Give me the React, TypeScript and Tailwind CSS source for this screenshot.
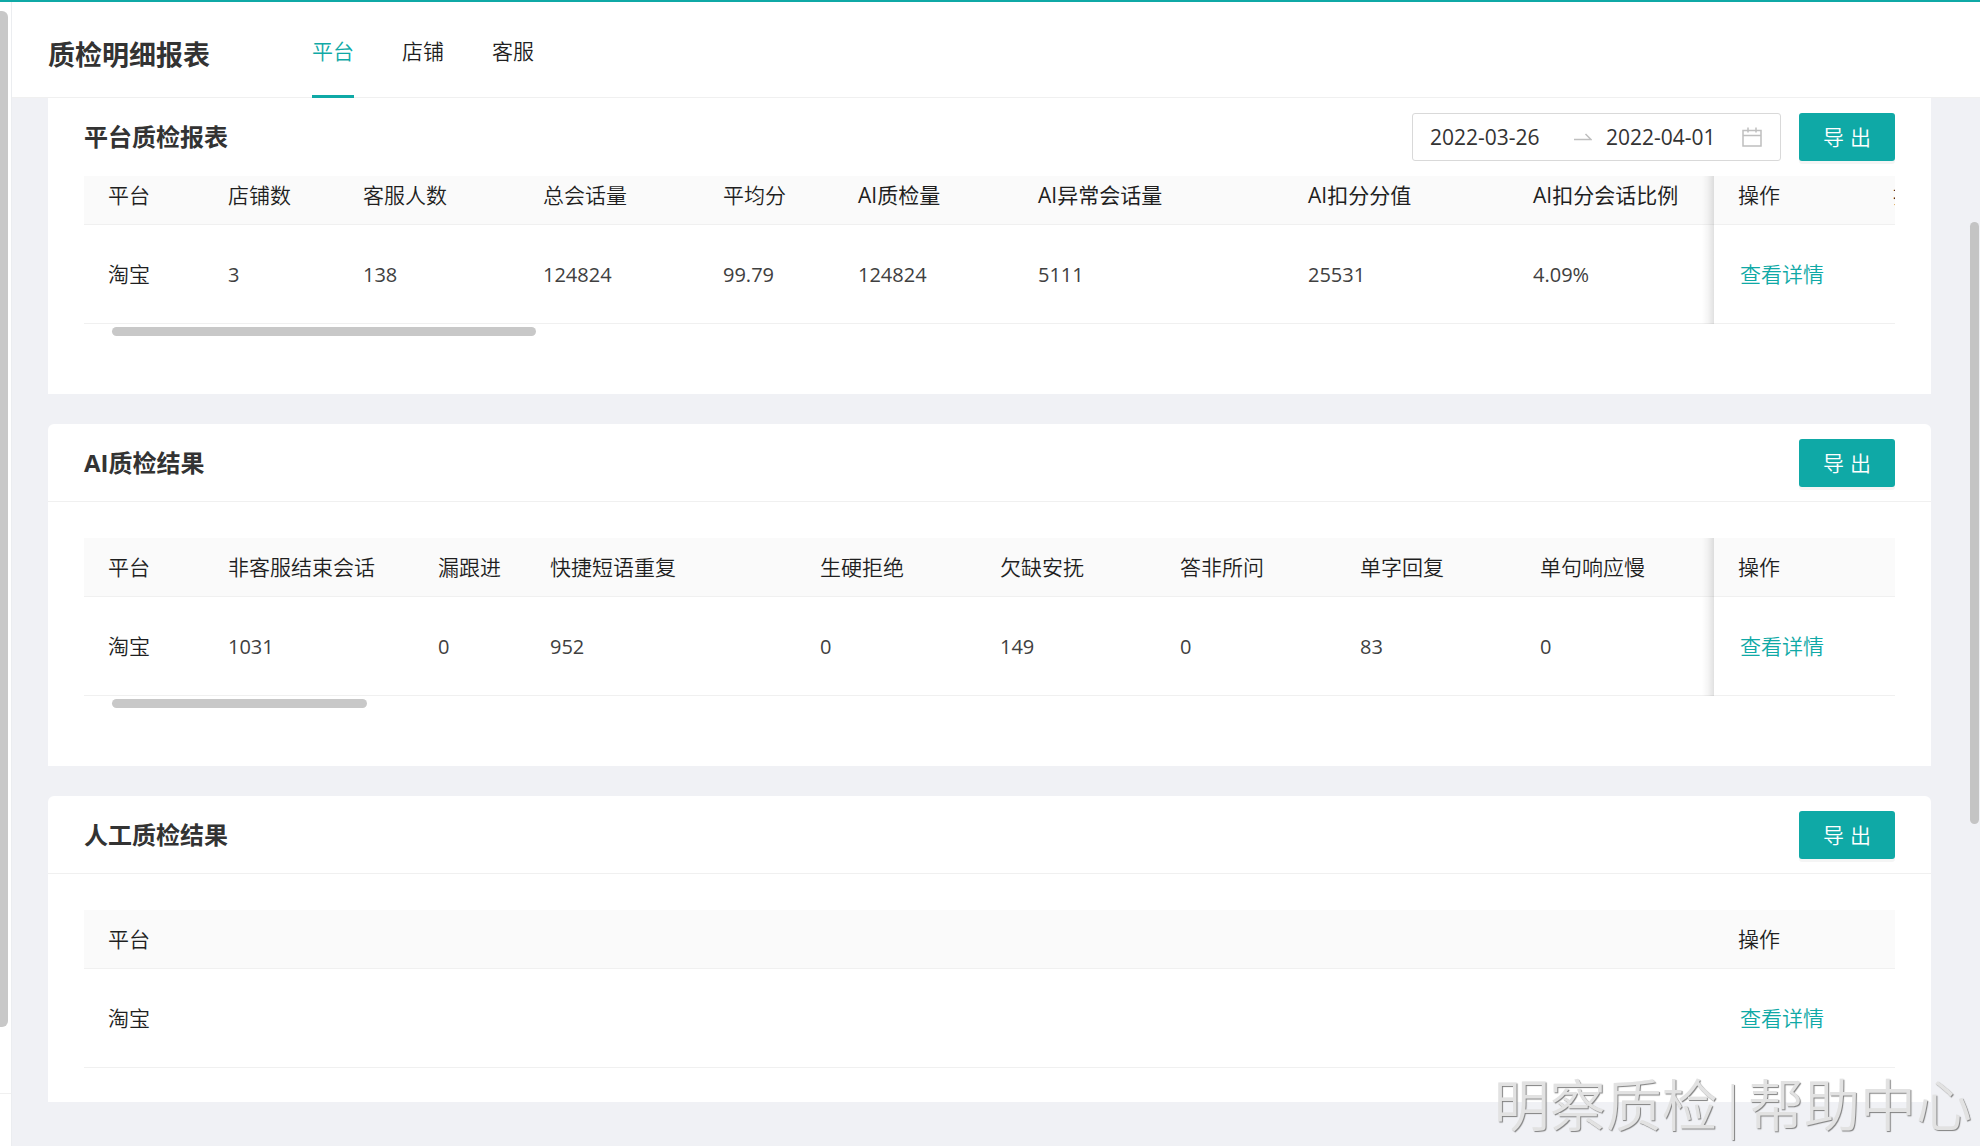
import React from 'react';
import clsx from 'clsx';

type Column = { title: string; value: string; width: string };

const platformColumns: Column[] = [
  { title: '平台', value: '淘宝', width: 'w-[120px]' },
  { title: '店铺数', value: '3', width: 'w-[135px]' },
  { title: '客服人数', value: '138', width: 'w-[180px]' },
  { title: '总会话量', value: '124824', width: 'w-[180px]' },
  { title: '平均分', value: '99.79', width: 'w-[135px]' },
  { title: 'AI质检量', value: '124824', width: 'w-[180px]' },
  { title: 'AI异常会话量', value: '5111', width: 'w-[270px]' },
  { title: 'AI扣分分值', value: '25531', width: 'w-[225px]' },
  { title: 'AI扣分会话比例', value: '4.09%', width: '' },
];

const aiColumns: Column[] = [
  { title: '平台', value: '淘宝', width: 'w-[120px]' },
  { title: '非客服结束会话', value: '1031', width: 'w-[210px]' },
  { title: '漏跟进', value: '0', width: 'w-[112px]' },
  { title: '快捷短语重复', value: '952', width: 'w-[270px]' },
  { title: '生硬拒绝', value: '0', width: 'w-[180px]' },
  { title: '欠缺安抚', value: '149', width: 'w-[180px]' },
  { title: '答非所问', value: '0', width: 'w-[180px]' },
  { title: '单字回复', value: '83', width: 'w-[180px]' },
  { title: '单句响应慢', value: '0', width: '' },
];

const manualColumns: Column[] = [{ title: '平台', value: '淘宝', width: '' }];

const tabs = ['平台', '店铺', '客服'];

const ExportButton: React.FC = () => (
  <button
    type="button"
    className="flex h-12 w-24 items-center justify-center gap-1.5 rounded-[3px] bg-[#0fa9a6] pt-0.5 text-[21px] font-[350] text-white shadow-[0_3px_0_rgba(0,0,0,0.04)]"
  >
    <span>导</span>
    <span>出</span>
  </button>
);

const DateRange: React.FC = () => (
  <div className="flex h-12 w-[369px] items-center rounded-[3px] border border-[#d9d9d9] bg-white pl-[17px] pr-[18px]">
    <input
      aria-label="开始日期"
      defaultValue="2022-03-26"
      className="w-[126px] pt-0.5 text-[21px] text-[#333333] outline-none"
    />
    <svg className="ml-[18px] h-4 w-[18px] shrink-0" viewBox="0 0 18 16" fill="none" stroke="#bfbfbf" strokeWidth="1.5">
      <path d="M0 10.5h17L11.5 5" />
    </svg>
    <input
      aria-label="结束日期"
      defaultValue="2022-04-01"
      className="ml-[14px] w-[126px] pt-0.5 text-[21px] text-[#333333] outline-none"
    />
    <svg className="ml-auto h-5 w-5 shrink-0" viewBox="0 0 20 20" fill="none" stroke="#bfbfbf" strokeWidth="1.5">
      <path d="M1 3.5h18v15.5H1zM1 8.5h18M6 .5v5M14 .5v5" />
    </svg>
  </div>
);

type ReportTableProps = {
  label: string;
  columns: Column[];
  fixed?: boolean;
  clipped?: boolean;
};

const ReportTable: React.FC<ReportTableProps> = ({ label, columns, fixed, clipped }) => {
  const headHeight = clipped ? 'h-[49px] pb-2' : 'h-[59px] pt-0.5';
  const shade = fixed &&
    'relative before:absolute before:top-0 before:-bottom-px before:right-full before:w-3 before:bg-linear-to-l before:from-black/12 before:via-black/4 before:to-transparent';

  return (
    <table aria-label={label} className="w-full table-fixed border-separate border-spacing-0 text-left text-[#1f1f1f]">
      <thead>
        <tr className="bg-[#fafafa]">
          {columns.map((col) => (
            <th
              key={col.title}
              className={clsx(
                'whitespace-nowrap border-b border-[#f0f0f0] pl-6 text-[21px]',
                col.title.startsWith('AI') ? 'font-normal' : 'font-[350]',
                headHeight,
                col.width,
              )}
            >
              {col.title}
            </th>
          ))}
          <th className={clsx('w-[181px] border-b border-[#f0f0f0] pl-6 text-[21px] font-[350]', headHeight, shade)}>
            操作
            {clipped && <span className="absolute right-0 w-[2px] overflow-hidden">扣</span>}
          </th>
        </tr>
      </thead>
      <tbody>
        <tr>
          {columns.map((col, i) => (
            <td
              key={col.title}
              className={clsx(
                'h-[99px] border-b border-[#f0f0f0] pl-6 pt-0.5',
                i === 0 ? 'text-[21px] font-[350]' : 'text-[20px] text-[#404040]',
              )}
            >
              {col.value}
            </td>
          ))}
          <td className={clsx('h-[99px] border-b border-[#f0f0f0] pl-[26px] pt-0.5 text-[21px] font-[350]', shade)}>
            <a href="#detail" className="text-[#0fa9a6]">查看详情</a>
          </td>
        </tr>
      </tbody>
    </table>
  );
};

type CardProps = {
  title: string;
  extra?: React.ReactNode;
  flush?: boolean;
  children: React.ReactNode;
};

const Card: React.FC<CardProps> = ({ title, extra, flush, children }) => (
  <section className={clsx('bg-white', !flush && 'rounded-t-md')}>
    <div className={clsx('flex h-[78px] items-center justify-between px-9', !flush && 'border-b border-[#f0f0f0]')}>
      <h2 className="text-[24px] font-bold text-[#333333]">{title}</h2>
      <div className="flex items-center gap-[18px]">
        {extra}
        <ExportButton />
      </div>
    </div>
    <div className={clsx('px-9', !flush && 'pt-9')}>{children}</div>
  </section>
);

const App: React.FC = () => {
  return (
    <div className="relative flex h-screen flex-col overflow-hidden bg-[#f0f1f5] font-['Open_Sans','Noto_Sans_CJK_SC',sans-serif]">
      <div className="h-[2px] shrink-0 bg-[#0fa9a6]" />
      <div className="flex min-h-0 grow">
        <aside className="flex w-3 shrink-0 flex-col border-r border-[#ebedf0] bg-white pt-[9px]">
          <div className="h-[1016px] w-2 rounded-r-md bg-[#c8c8c8]" />
          <div className="mt-[66px] border-t border-[#f0f0f0]" />
        </aside>

        <main className="min-w-0 grow">
          <header className="flex h-24 items-stretch border-b border-[#f0f0f0] bg-white pl-9">
            <h1 className="flex w-[264px] items-center pt-3 text-[27px] font-bold text-[#333333]">质检明细报表</h1>
            <nav className="flex gap-12">
              {tabs.map((tab, i) => (
                <a
                  key={tab}
                  href={`#${tab}`}
                  className={clsx(
                    '-mb-px flex items-center border-b-[3px] pt-1.5 text-[21px] font-[350]',
                    i === 0 ? 'border-[#0fa9a6] text-[#0fa9a6]' : 'border-transparent text-[#1f1f1f]',
                  )}
                >
                  {tab}
                </a>
              ))}
            </nav>
          </header>

          <div className="flex flex-col gap-[30px] pl-9 pr-[49px]">
            <Card title="平台质检报表" extra={<DateRange />} flush>
              <ReportTable label="平台质检报表" columns={platformColumns} fixed clipped />
              <div className="ml-7 mt-[3px] h-[9px] w-[424px] rounded-full bg-[#c8c8c8]" />
              <div className="h-[58px]" />
            </Card>

            <Card title="AI质检结果">
              <ReportTable label="AI质检结果" columns={aiColumns} fixed />
              <div className="ml-7 mt-[3px] h-[9px] w-[255px] rounded-full bg-[#c8c8c8]" />
              <div className="h-[58px]" />
            </Card>

            <Card title="人工质检结果">
              <ReportTable label="人工质检结果" columns={manualColumns} />
              <div className="h-[34px]" />
            </Card>
          </div>
        </main>
      </div>

      <div className="absolute right-px top-[222px] h-[602px] w-[9px] rounded-full bg-[#c4c4c4]" />
      <p className="absolute bottom-0 right-2 text-[56px] leading-[84px] font-[350] text-[#e2e2e2] [text-shadow:1px_1px_1px_#808080]">
        明察质检|帮助中心
      </p>
    </div>
  );
};

export default App;
